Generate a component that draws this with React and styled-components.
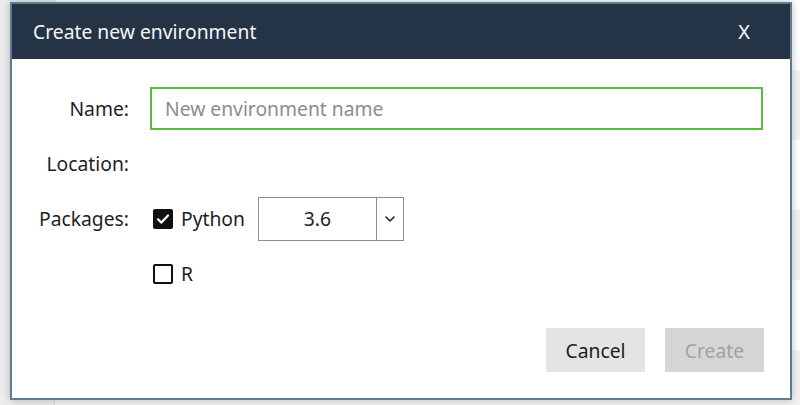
import React from "react";
import styled, { createGlobalStyle } from "styled-components";

const FS = "19.3px";

const Global = createGlobalStyle`
  html, body { margin: 0; padding: 0; }
  body { width: 800px; height: 405px; overflow: hidden; background: #fff;
    font-family: "Noto Sans", "Open Sans", sans-serif; }
  * { box-sizing: border-box; }
`;

const Page = styled.div`
  position: relative;
  width: 800px;
  height: 405px;
  overflow: hidden;
  background: #fff;
`;

const Table = styled.div`
  display: flex;
  flex-direction: column;
`;

const BgRow = styled.div`
  height: 70px;
  display: flex;
  align-items: center;
  background: ${(p) => (p.$alt ? "#f3f3f3" : "#ffffff")};
  font-size: 18px;
  color: #222;
`;

const BgGutter = styled.div`
  width: 55px;
  height: 100%;
  background: #ececec;
  border-right: 1px solid #dcdcdc;
`;

const BgCheck = styled.div`
  width: 15px;
  height: 15px;
  margin-left: 18px;
  background: #43b02a;
  border-radius: 2px;
`;

const BgName = styled.div`
  width: 150px;
  margin-left: 12px;
`;

const BgDesc = styled.div`
  flex: 1;
  margin-left: 20px;
  white-space: nowrap;
`;

const Dialog = styled.div`
  position: absolute;
  left: 10px;
  top: 2px;
  width: 782px;
  height: 398px;
  background: #fff;
  border: 2px solid #5e7c92;
  display: flex;
  flex-direction: column;
  box-shadow: 0 0 8px rgba(0, 0, 0, 0.25);
`;

const Header = styled.div`
  height: 55px;
  flex: 0 0 55px;
  background: #243446;
  display: flex;
  align-items: center;
  justify-content: space-between;
  padding: 0 40px 0 21px;
  color: #f4f6f8;
  font-size: ${FS};
`;

const Title = styled.div``;

const Close = styled.div`
  font-size: 20px;
`;

const Body = styled.div`
  flex: 1;
  display: flex;
  flex-direction: column;
  padding: 28px 26px 0 0;
`;

const Form = styled.div`
  display: grid;
  grid-template-columns: 117px 1fr;
  grid-auto-rows: 43px;
  column-gap: 21px;
  row-gap: 12px;
  align-items: center;
`;

const Label = styled.div`
  text-align: right;
  font-size: ${FS};
  color: #1e1e1e;
  white-space: nowrap;
`;

const NameInput = styled.input`
  height: 43px;
  width: 613px;
  border: 2px solid #5cbb3f;
  outline: none;
  padding: 0 13px;
  font-family: inherit;
  font-size: ${FS};
  color: #222;
  &::placeholder { color: #8c8c8c; }
`;

const Controls = styled.div`
  display: flex;
  align-items: center;
`;

const Box = styled.div`
  width: 20px;
  height: 20px;
  margin-left: 3px;
  border-radius: 2px;
  border: 2px solid #111;
  background: ${(p) => (p.$checked ? "#111" : "#fff")};
  display: flex;
  align-items: center;
  justify-content: center;
`;

const CheckText = styled.span`
  margin-left: 8px;
  font-size: ${FS};
  color: #1e1e1e;
`;

const Select = styled.div`
  margin-left: 13px;
  width: 146px;
  height: 44px;
  border: 1px solid #8e8e8e;
  display: flex;
  background: #fff;
`;

const SelectValue = styled.div`
  flex: 1;
  display: flex;
  align-items: center;
  justify-content: center;
  font-size: ${FS};
  color: #1e1e1e;
  border-right: 1px solid #8e8e8e;
`;

const SelectArrow = styled.div`
  width: 26px;
  display: flex;
  align-items: center;
  justify-content: center;
`;

const Footer = styled.div`
  display: flex;
  justify-content: flex-end;
  gap: 20px;
  margin-top: 33px;
`;

const Button = styled.div`
  width: 99px;
  height: 44px;
  display: flex;
  align-items: center;
  justify-content: center;
  font-size: ${FS};
  background: ${(p) => (p.$disabled ? "#d5d5d5" : "#e4e4e4")};
  color: ${(p) => (p.$disabled ? "#a3a3a3" : "#1e1e1e")};
`;

const rows = [
  { name: "", desc: "" },
  { name: "", desc: "s" },
  { name: "", desc: "" },
  { name: "", desc: "y" },
  { name: "", desc: "" },
  { name: "astropy", desc: "Community developed python library for astronomy" },
];

export default function App() {
  return (
    <Page>
      <Global />
      <Table>
        {rows.map((r, i) => (
          <BgRow key={i} $alt={i % 2 === 1}>
            <BgGutter />
            <BgCheck />
            <BgName>{r.name}</BgName>
            <BgDesc>{r.desc}</BgDesc>
          </BgRow>
        ))}
      </Table>
      <Dialog>
        <Header>
          <Title>Create new environment</Title>
          <Close>X</Close>
        </Header>
        <Body>
          <Form>
            <Label>Name:</Label>
            <NameInput placeholder="New environment name" />
            <Label>Location:</Label>
            <div />
            <Label>Packages:</Label>
            <Controls>
              <Box $checked>
                <svg width="14" height="14" viewBox="0 0 14 14">
                  <path d="M2 7.3 L5.4 10.6 L12 3.4" fill="none" stroke="#fff" strokeWidth="2.2" strokeLinecap="round" strokeLinejoin="round" />
                </svg>
              </Box>
              <CheckText>Python</CheckText>
              <Select>
                <SelectValue>3.6</SelectValue>
                <SelectArrow>
                  <svg width="10" height="6" viewBox="0 0 10 6">
                    <path d="M1 1 L5 5 L9 1" fill="none" stroke="#222" strokeWidth="1.6" strokeLinecap="round" strokeLinejoin="round" />
                  </svg>
                </SelectArrow>
              </Select>
            </Controls>
            <div />
            <Controls>
              <Box />
              <CheckText>R</CheckText>
            </Controls>
          </Form>
          <Footer>
            <Button>Cancel</Button>
            <Button $disabled>Create</Button>
          </Footer>
        </Body>
      </Dialog>
    </Page>
  );
}
